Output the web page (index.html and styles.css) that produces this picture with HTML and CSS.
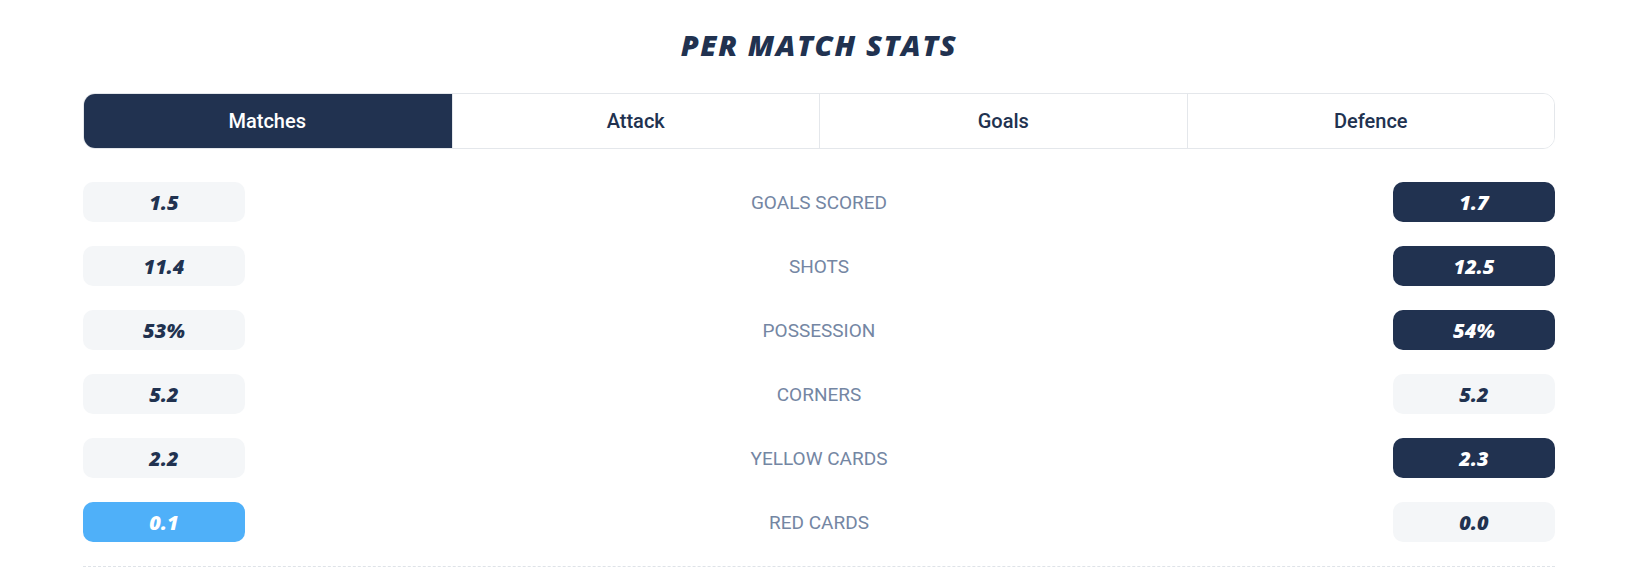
FILE: index.html
```html
<!DOCTYPE html>
<html lang="en">
<head>
<meta charset="utf-8">
<title>Per Match Stats</title>
<link rel="stylesheet" href="styles.css">
</head>
<body>
<section class="stats">
  <h2 class="stats__title">PER MATCH STATS</h2>
  <nav class="tabs">
    <button class="tab tab--active">Matches</button>
    <button class="tab">Attack</button>
    <button class="tab">Goals</button>
    <button class="tab">Defence</button>
  </nav>
  <div class="rows">
    <div class="row">
      <span class="val">1.5</span>
      <span class="label">GOALS SCORED</span>
      <span class="val val--dark">1.7</span>
    </div>
    <div class="row">
      <span class="val">11.4</span>
      <span class="label">SHOTS</span>
      <span class="val val--dark">12.5</span>
    </div>
    <div class="row">
      <span class="val">53%</span>
      <span class="label">POSSESSION</span>
      <span class="val val--dark">54%</span>
    </div>
    <div class="row">
      <span class="val">5.2</span>
      <span class="label">CORNERS</span>
      <span class="val">5.2</span>
    </div>
    <div class="row">
      <span class="val">2.2</span>
      <span class="label">YELLOW CARDS</span>
      <span class="val val--dark">2.3</span>
    </div>
    <div class="row">
      <span class="val val--blue">0.1</span>
      <span class="label">RED CARDS</span>
      <span class="val">0.0</span>
    </div>
  </div>
</section>
</body>
</html>
```
FILE: styles.css
```css
* { box-sizing: border-box; }
html, body { margin: 0; padding: 0; background: #ffffff; }
body { font-family: Roboto, "Liberation Sans", sans-serif; color: #213250; }

.stats {
  width: 1472px;
  margin: 0 0 0 83px;
  padding-top: 25px;
  padding-bottom: 0;
  border-bottom: 1px dashed #dfe3e8;
}

.stats__title {
  margin: 0 0 28px;
  text-align: center;
  font-family: "Open Sans", "DejaVu Sans", sans-serif;
  font-style: italic;
  font-weight: 800;
  font-size: 29px;
  line-height: 40px;
  letter-spacing: 1.6px;
  color: #213250;
}

.tabs {
  display: grid;
  grid-template-columns: repeat(4, 1fr);
  height: 56px;
  border: 1px solid #e4e7eb;
  border-radius: 12px;
  overflow: hidden;
}

.tab {
  border: 0;
  border-left: 1px solid #e4e7eb;
  background: #ffffff;
  font-family: Roboto, "Liberation Sans", sans-serif;
  font-weight: 500;
  font-size: 20px;
  color: #213250;
  padding: 0;
  margin: 0;
}
.tab:first-child { border-left: 0; }
.tab--active { background: #213250; color: #ffffff; margin: -1px 0 -1px -1px; }

.rows {
  display: flex;
  flex-direction: column;
  gap: 24px;
  padding: 33px 0 24px;
}

.row {
  display: grid;
  grid-template-columns: 162px 1fr 162px;
  align-items: center;
  height: 40px;
}

.val {
  height: 40px;
  border-radius: 10px;
  background: #f4f6f8;
  display: flex;
  align-items: center;
  justify-content: center;
  font-family: "Open Sans", "DejaVu Sans", sans-serif;
  font-style: italic;
  font-weight: 800;
  font-size: 20px;
  color: #213250;
}
.val--dark { background: #213250; color: #ffffff; }
.val--blue { background: #4fb0f9; color: #ffffff; }

.label {
  text-align: center;
  font-family: Roboto, "Liberation Sans", sans-serif;
  font-size: 19px;
  color: #7486a3;
}
```
